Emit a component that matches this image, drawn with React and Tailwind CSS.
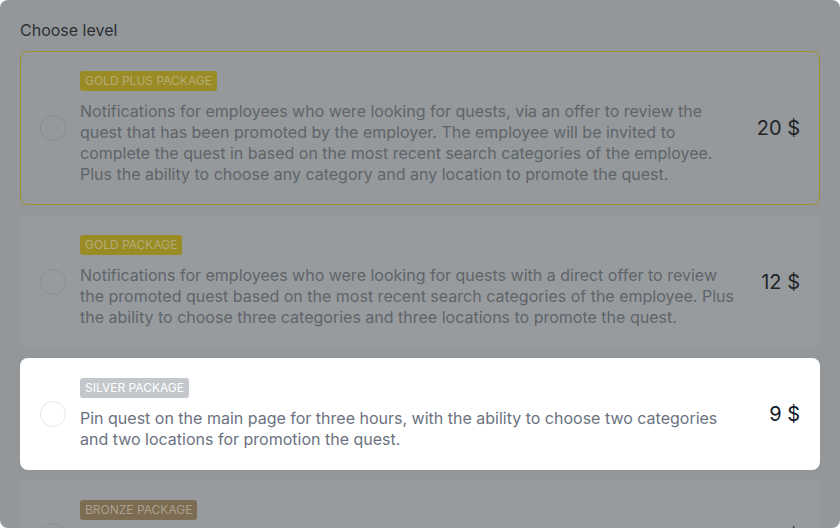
export default function App() {
  const font = { fontFamily: "Inter, 'Noto Sans', sans-serif" };
  return (
    <div className="w-[840px] h-[528px] bg-white" style={font}>
      <div className="w-full h-full rounded-lg bg-[#939799] overflow-hidden px-5 pt-[20px]">
        <div className="text-[16px] leading-[20px] text-[#2c2f33] mb-[11px]">Choose level</div>
        <div className="flex flex-col gap-[10px]">
          {/* Gold plus */}
          <div className="flex items-center rounded-lg border border-[#a08f25] bg-[#95999b] px-[19px] py-[19px]">
            <div className="w-[26px] h-[26px] rounded-full border border-[#898d90] shrink-0 mr-[14px]"></div>
            <div className="flex-1 flex flex-col items-start">
              <span className="block rounded-[3px] bg-[#9a8b24] text-[#b4ab78] text-[12px] leading-[20px] px-[5px] uppercase">Gold plus package</span>
              <p className="mt-[10px] text-[16px] leading-[21px] text-[#5f6469]">
                Notifications for employees who were looking for quests, via an offer to review the quest that has been promoted by the employer. The employee will be invited to complete the quest in based on the most recent search categories of the employee. Plus the ability to choose any category and any location to promote the quest.
              </p>
            </div>
            <div className="w-[58px] shrink-0 text-right text-[20px] text-[#222528]">20 $</div>
          </div>
          {/* Gold */}
          <div className="flex items-center rounded-lg border border-transparent bg-[#979b9e] px-[19px] py-[19px]">
            <div className="w-[26px] h-[26px] rounded-full border border-[#8c9093] shrink-0 mr-[14px]"></div>
            <div className="flex-1 flex flex-col items-start">
              <span className="block rounded-[3px] bg-[#9a8b24] text-[#b4ab78] text-[12px] leading-[20px] px-[5px] uppercase">Gold package</span>
              <p className="mt-[10px] text-[16px] leading-[21px] text-[#5f6469]">
                Notifications for employees who were looking for quests with a direct offer to review the promoted quest based on the most recent search categories of the employee. Plus the ability to choose three categories and three locations to promote the quest.
              </p>
            </div>
            <div className="w-[58px] shrink-0 text-right text-[20px] text-[#222528]">12 $</div>
          </div>
          {/* Silver (highlighted) */}
          <div className="flex items-center rounded-lg border border-transparent bg-white px-[19px] py-[19px]">
            <div className="w-[26px] h-[26px] rounded-full border border-[#e5e7eb] shrink-0 mr-[14px]"></div>
            <div className="flex-1 flex flex-col items-start">
              <span className="block rounded-[3px] bg-[#c3c7cc] text-white text-[12px] leading-[20px] px-[5px] uppercase">Silver package</span>
              <p className="mt-[10px] text-[16px] leading-[21px] text-[#6b7280]">
                Pin quest on the main page for three hours, with the ability to choose two categories and two locations for promotion the quest.
              </p>
            </div>
            <div className="w-[58px] shrink-0 text-right text-[20px] text-[#111827]">9 $</div>
          </div>
          {/* Bronze */}
          <div className="flex items-center rounded-lg border border-transparent bg-[#979b9e] px-[19px] py-[19px]">
            <div className="w-[26px] h-[26px] rounded-full border border-[#8c9093] shrink-0 mr-[14px]"></div>
            <div className="flex-1 flex flex-col items-start">
              <span className="block rounded-[3px] bg-[#7c6c51] text-[#a9a192] text-[12px] leading-[20px] px-[5px] uppercase">Bronze package</span>
              <p className="mt-[10px] text-[16px] leading-[21px] text-[#5f6469]">
                Pin quest on the main page for one hour, with the ability to choose one category and one location for promotion the quest.
              </p>
            </div>
            <div className="w-[58px] shrink-0 text-right text-[20px] text-[#222528]">5 $</div>
          </div>
        </div>
      </div>
    </div>
  );
}
